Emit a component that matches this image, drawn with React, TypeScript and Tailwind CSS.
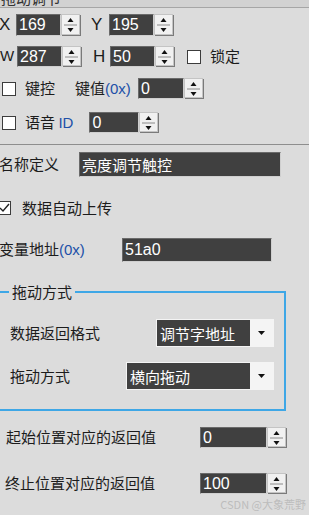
import React from "react";

// ── Fonts / colours ────────────────────────────────────────────────────────
const CJK = "font-['Noto_Sans_CJK_SC','Microsoft_YaHei',sans-serif]";
const LAT = "font-['Liberation_Sans',Arial,'Noto_Sans_CJK_SC',sans-serif]";

// ── Small pieces ───────────────────────────────────────────────────────────
function Spinner({ h = 22 }: { h?: number }) {
  const mid = Math.round(h / 2);
  return (
    <svg width="20" height={h} viewBox={`0 0 20 ${h}`} className="shrink-0 block">
      <rect x="0.5" y="0.5" width="18" height={h - 2} fill="#f1f1f1" stroke="#c4c4c4" />
      <line x1="1" y1={h - 0.5} x2="20" y2={h - 0.5} stroke="#7a7a7a" />
      <line x1="19.5" y1="1" x2="19.5" y2={h} stroke="#7a7a7a" />
      <line x1="3" y1={mid} x2="16" y2={mid} stroke="#8a8a8a" />
      <polygon points={`6.5,${mid - 3} 12.5,${mid - 3} 9.5,${mid - 7}`} fill="#111" />
      <polygon points={`6.5,${mid + 3} 12.5,${mid + 3} 9.5,${mid + 7}`} fill="#111" />
    </svg>
  );
}

function DarkBox({
  w,
  h,
  children,
  cn = "",
}: {
  w: number;
  h: number;
  children?: React.ReactNode;
  cn?: string;
}) {
  return (
    <div
      style={{ width: w, height: h }}
      className={`shrink-0 bg-[#404040] border border-t-[#6a6a6a] border-l-[#6a6a6a] border-b-[#cfcfcf] border-r-[#cfcfcf] text-white flex items-center pl-[2px] leading-none overflow-hidden whitespace-nowrap ${cn}`}
    >
      {children}
    </div>
  );
}

function SpinInput({ w, h = 22, value }: { w: number; h?: number; value: string }) {
  return (
    <div className="flex shrink-0">
      <DarkBox w={w} h={h} cn={`${LAT} text-[16px]`}>
        {value}
      </DarkBox>
      <Spinner h={h} />
    </div>
  );
}

function Select({ w, value }: { w: number; value: string }) {
  return (
    <div className="flex h-[28px] shrink-0 border border-[#f4f4f4]">
      <div
        style={{ width: w - 25 }}
        className={`bg-[#404040] text-white text-[15px] ${CJK} flex items-center pl-[3px] leading-none`}
      >
        {value}
      </div>
      <div className="w-[23px] bg-[#f4f4f4] flex items-center justify-center">
        <svg width="7" height="4" viewBox="0 0 7 4">
          <polygon points="0,0 7,0 3.5,4" fill="#111" />
        </svg>
      </div>
    </div>
  );
}

function CheckBox({ checked = false }: { checked?: boolean }) {
  return (
    <div className="w-[14px] h-[14px] shrink-0 bg-white border border-[#3c3c3c] flex items-center justify-center">
      {checked && (
        <svg width="11" height="10" viewBox="0 0 11 10">
          <path d="M1 5 L4 8 L10 1" stroke="#222" strokeWidth="1.4" fill="none" />
        </svg>
      )}
    </div>
  );
}

// ── Page ───────────────────────────────────────────────────────────────────
export default function App() {
  return (
    <div className={`relative w-[309px] h-[515px] overflow-hidden bg-[#dcdcdc] text-[#1c1c1c] ${CJK}`}>
      {/* clipped title strip */}
      <div className="h-[8px] overflow-hidden bg-[#d2d2d2] border-b border-[#a6a6a6]">
        <div className="-mt-[11px] pl-[1px] text-[15px] leading-[18px] text-[#333]">拖动调节</div>
      </div>

      {/* X / Y */}
      <div className="mt-[6px] h-[22px] flex items-center">
        <span className={`${LAT} text-[17px] w-[17px] -ml-[1px]`}>X</span>
        <SpinInput w={45} value="169" />
        <span className={`${LAT} text-[17px] ml-[10px] w-[18px]`}>Y</span>
        <SpinInput w={45} value="195" />
      </div>

      {/* W / H / 锁定 */}
      <div className="mt-[10px] h-[21px] flex items-center">
        <span className={`${LAT} text-[15px] w-[17px]`}>W</span>
        <SpinInput w={45} h={21} value="287" />
        <span className={`${LAT} text-[17px] ml-[11px] w-[17px]`}>H</span>
        <SpinInput w={45} h={21} value="50" />
        <div className="ml-[12px]">
          <CheckBox />
        </div>
        <span className="ml-[9px] text-[15px]">锁定</span>
      </div>

      {/* 键控 */}
      <div className="mt-[11px] h-[21px] flex items-center">
        <div className="ml-[2px]">
          <CheckBox />
        </div>
        <span className="ml-[9px] text-[15px]">键控</span>
        <span className="ml-[20px] text-[15px]">
          键值<span className={`${LAT} text-[#2050a8]`}>(0x)</span>
        </span>
        <div className="ml-[7px]">
          <SpinInput w={46} h={21} value="0" />
        </div>
      </div>

      {/* 语音 ID */}
      <div className="mt-[13px] h-[21px] flex items-center">
        <div className="ml-[2px]">
          <CheckBox />
        </div>
        <span className="ml-[9px] text-[15px]">
          语音 <span className={`${LAT} text-[#2050a8]`}>ID</span>
        </span>
        <div className="ml-[16px]">
          <SpinInput w={50} h={21} value="0" />
        </div>
      </div>

      <div className="mt-[11px] border-t border-[#8e8e8e]" />

      {/* 名称定义 */}
      <div className="mt-[7px] h-[25px] flex items-center">
        <span className="text-[15px] w-[80px] -ml-[1px]">名称定义</span>
        <DarkBox w={202} h={25} cn="text-[15px]">
          亮度调节触控
        </DarkBox>
      </div>

      {/* 数据自动上传 */}
      <div className="mt-[24px] h-[14px] flex items-center">
        <div className="-ml-[3px]">
          <CheckBox checked />
        </div>
        <span className="ml-[11px] text-[15px]">数据自动上传</span>
      </div>

      {/* 变量地址 */}
      <div className="mt-[23px] h-[24px] flex items-center">
        <span className="text-[15px] w-[123px] -ml-[1px]">
          变量地址<span className={`${LAT} text-[#2050a8]`}>(0x)</span>
        </span>
        <DarkBox w={150} h={24} cn={`${LAT} text-[16px]`}>
          51a0
        </DarkBox>
      </div>

      {/* 拖动方式 group */}
      <div className="relative mt-[29px] -ml-[3px] w-[289px] border-2 border-solid border-[#3ea7e6] pt-[26px] pb-[19px]">
        <span className="absolute -top-[12px] left-[10px] px-[3px] bg-[#dcdcdc] text-[15px] leading-[22px]">
          拖动方式
        </span>
        <div className="flex items-center h-[28px]">
          <span className="ml-[11px] w-[146px] text-[15px]">数据返回格式</span>
          <Select w={118} value="调节字地址" />
        </div>
        <div className="mt-[15px] flex items-center h-[28px]">
          <span className="ml-[11px] w-[116px] text-[15px]">拖动方式</span>
          <Select w={148} value="横向拖动" />
        </div>
      </div>

      {/* 返回值 */}
      <div className="mt-[16px] h-[21px] flex items-center">
        <span className="ml-[6px] w-[194px] text-[15px]">起始位置对应的返回值</span>
        <SpinInput w={67} h={21} value="0" />
      </div>
      <div className="mt-[25px] h-[21px] flex items-center">
        <span className="ml-[5px] w-[195px] text-[15px]">终止位置对应的返回值</span>
        <SpinInput w={67} h={21} value="100" />
      </div>

      {/* watermark */}
      <span className="absolute right-[3px] top-[496px] text-[11px] text-[#bdbdbd]">CSDN @大象荒野</span>
    </div>
  );
}
